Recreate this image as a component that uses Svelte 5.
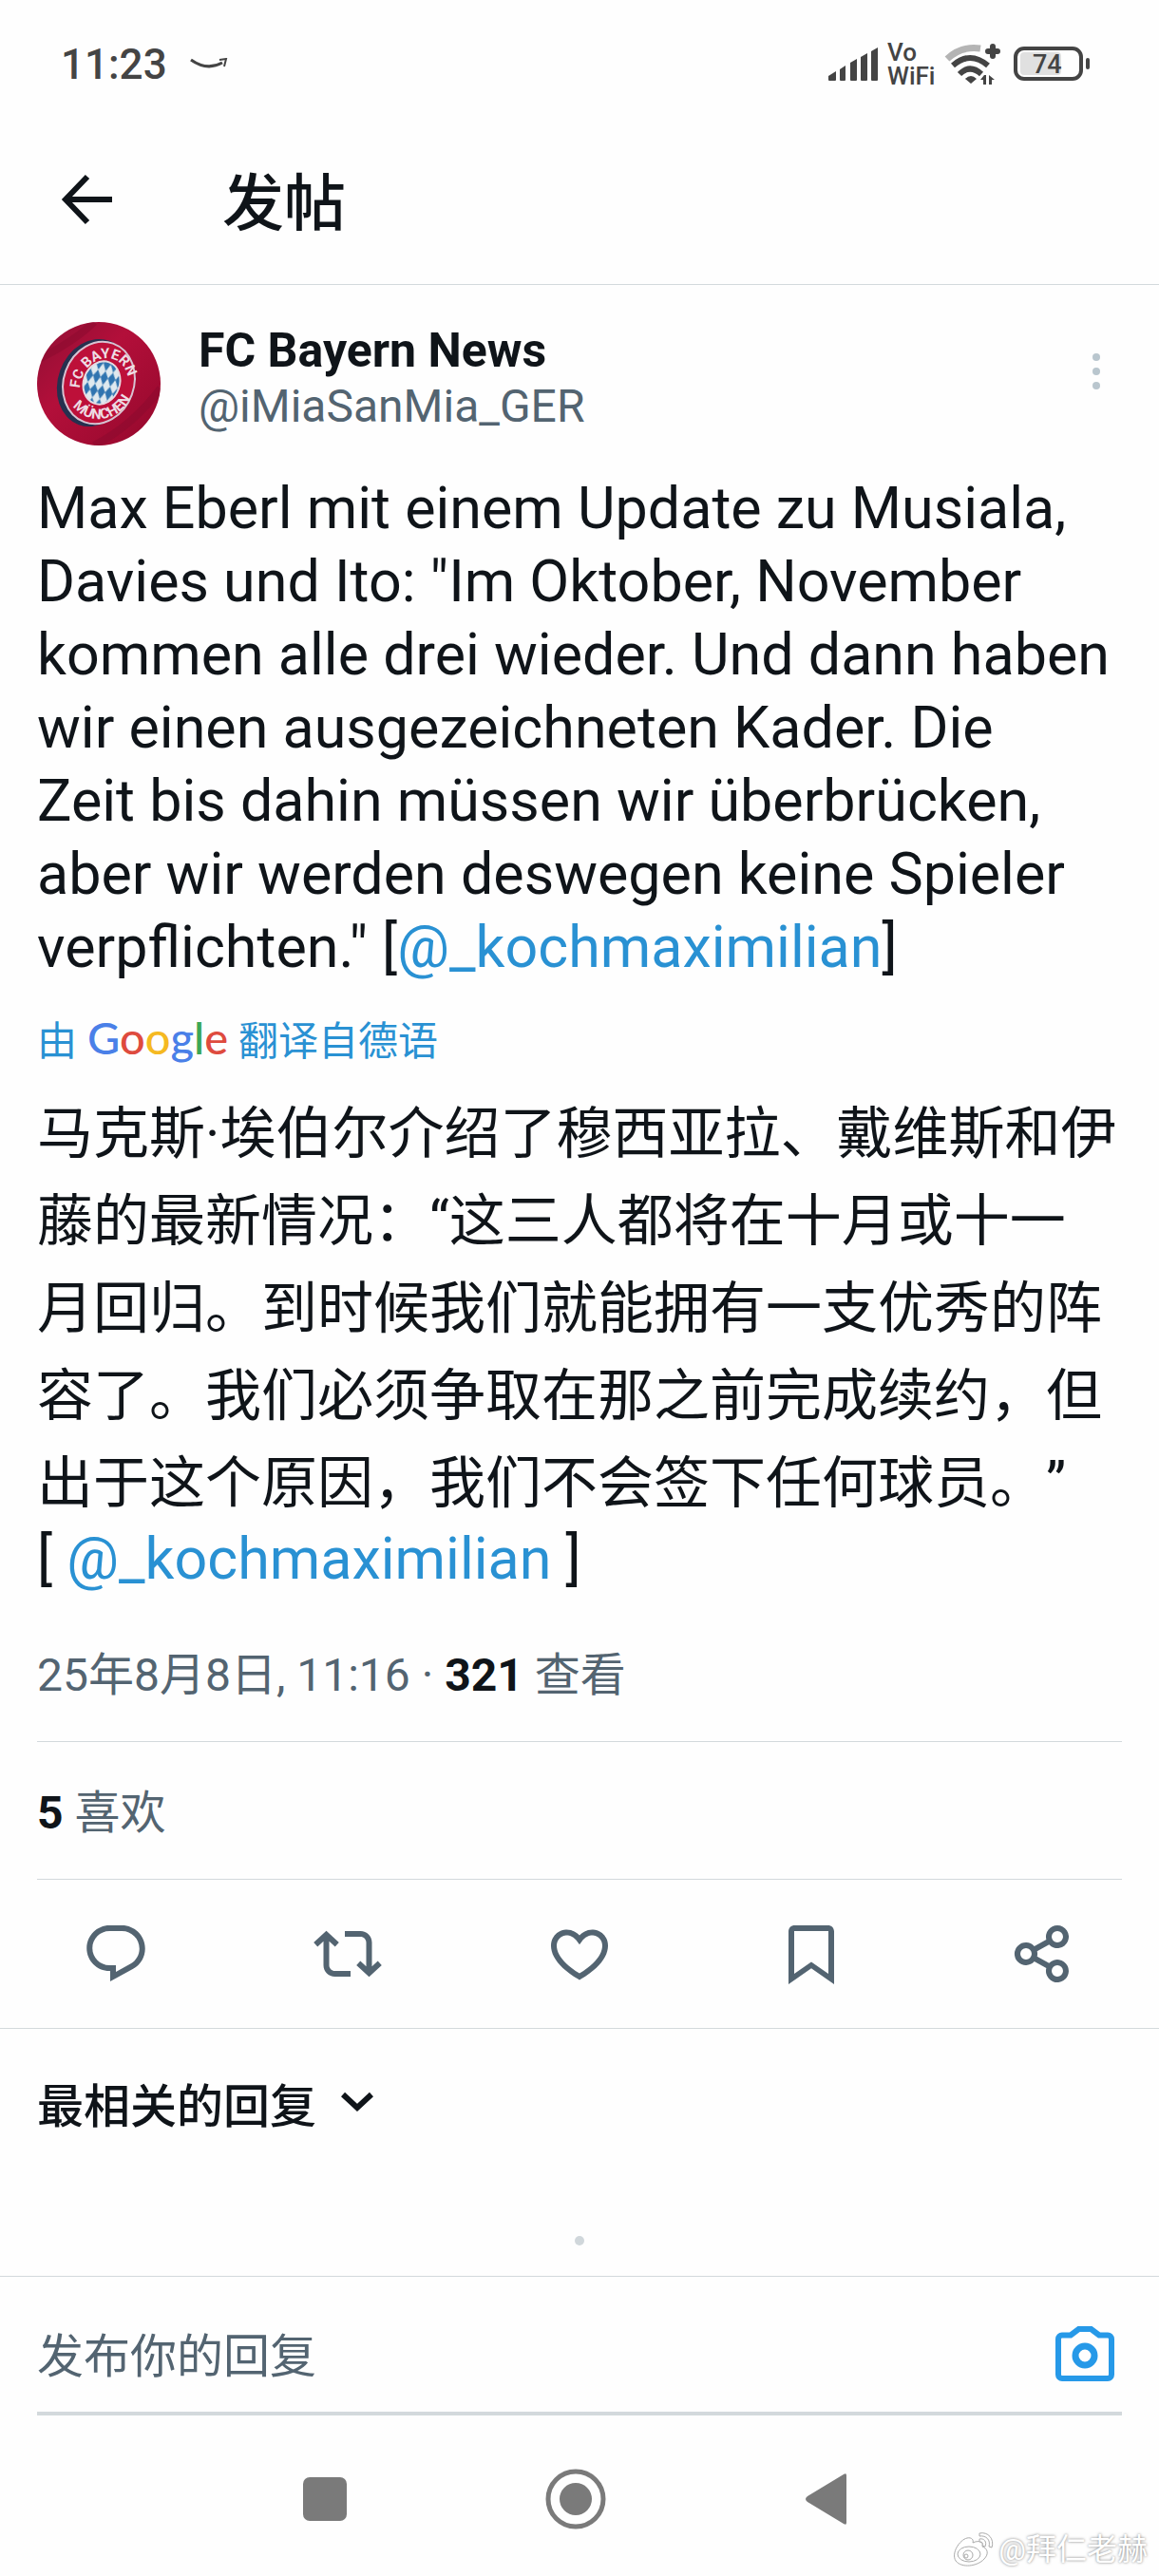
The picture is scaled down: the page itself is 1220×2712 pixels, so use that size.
<script lang="ts">
  interface Action {
    label: string;
    path: string;
  }

  const actions: Action[] = [
    {
      label: '回复',
      path: 'M1.751 10c0-4.42 3.584-8 8.005-8h4.366c4.49 0 8.129 3.64 8.129 8.13 0 2.96-1.607 5.68-4.196 7.11l-8.054 4.46v-3.69h-.067c-4.49.1-8.183-3.51-8.183-8.01zm8.005-6c-3.317 0-6.005 2.69-6.005 6 0 3.37 2.77 6.08 6.138 6.01l.351-.01h1.761v2.3l5.087-2.81c1.951-1.08 3.163-3.13 3.163-5.36 0-3.39-2.744-6.13-6.129-6.13H9.756z'
    },
    {
      label: '转帖',
      path: 'M4.5 3.88l4.432 4.14-1.364 1.46L5.5 7.55V16c0 1.1.896 2 2 2H13v2H7.5c-2.209 0-4-1.79-4-4V7.55L1.432 9.48.068 8.02 4.5 3.88zM16.5 6H11V4h5.5c2.209 0 4 1.79 4 4v8.45l2.068-1.93 1.364 1.46-4.432 4.14-4.432-4.14 1.364-1.46 2.068 1.93V8c0-1.1-.896-2-2-2z'
    },
    {
      label: '喜欢',
      path: 'M16.697 5.5c-1.222-.06-2.679.51-3.89 2.16l-.805 1.09-.806-1.09C9.984 6.01 8.526 5.44 7.304 5.5c-1.243.07-2.349.78-2.91 1.91-.552 1.12-.633 2.78.479 4.82 1.074 1.97 3.257 4.27 7.129 6.61 3.87-2.34 6.052-4.64 7.126-6.61 1.111-2.04 1.03-3.7.477-4.82-.561-1.13-1.666-1.84-2.908-1.91zm4.187 7.69c-1.351 2.48-4.001 5.12-8.379 7.67l-.503.3-.504-.3c-4.379-2.55-7.029-5.19-8.382-7.67-1.36-2.5-1.41-4.86-.514-6.67.887-1.79 2.647-2.91 4.601-3.01 1.651-.09 3.368.56 4.798 2.01 1.429-1.45 3.146-2.1 4.796-2.01 1.954.1 3.714 1.22 4.601 3.01.896 1.81.846 4.17-.514 6.67z'
    },
    {
      label: '书签',
      path: 'M4 4.2C4 2.9 4.9 2 6.2 2h11.6C19.1 2 20 2.9 20 4.2v18.5l-8-5.6-8 5.6V4.2zM6 4v15l6-4.2 6 4.2V4H6z'
    },
    {
      label: '分享',
      path: 'M17 2a4 4 0 1 1-2.9 6.75l-4.2 2.3a4 4 0 0 1 0 1.9l4.2 2.3a4 4 0 1 1-.98 1.75l-4.2-2.3a4 4 0 1 1 0-5.4l4.2-2.3A4 4 0 0 1 17 2zm0 2a2 2 0 1 0 0 4 2 2 0 0 0 0-4zM6 10a2 2 0 1 0 0 4 2 2 0 0 0 0-4zm11 6a2 2 0 1 0 0 4 2 2 0 0 0 0-4z'
    }
  ];

  const original = [
    'Max Eberl mit einem Update zu Musiala,',
    'Davies und Ito: "Im Oktober, November',
    'kommen alle drei wieder. Und dann haben',
    'wir einen ausgezeichneten Kader. Die',
    'Zeit bis dahin müssen wir überbrücken,',
    'aber wir werden deswegen keine Spieler',
    'verpflichten." ['
  ].join('\n');

  const translated = [
    '马克斯·埃伯尔介绍了穆西亚拉、戴维斯和伊',
    '藤的最新情况：“这三人都将在十月或十一',
    '月回归。到时候我们就能拥有一支优秀的阵',
    '容了。我们必须争取在那之前完成续约，但',
    '出于这个原因，我们不会签下任何球员。”'
  ].join('\n');

  let reply = '';
</script>

<div class="screen">
  <div class="status">
    <span class="clock">11:23</span>
    <svg class="smile" viewBox="0 0 40 14" width="40" height="14">
      <path d="M1 2Q18 14 34 5" fill="none" stroke="#444" stroke-width="3" />
      <path d="M31 2l7-1-2 8" fill="none" stroke="#444" stroke-width="2" />
    </svg>
    <svg class="signals" viewBox="0 -6 280 64" width="280" height="64">
      <g fill="#444">
        <path d="M2 42v-4l8-5v9q0 1-1 1H3q-1 0-1-1z" />
        <path d="M14 42V31l6-4v15q0 1-1 1h-4q-1 0-1-1z" />
        <path d="M25 42V24l7-4v22q0 1-1 1h-5q-1 0-1-1z" />
        <path d="M36 42V18l7-4v28q0 1-1 1h-5q-1 0-1-1z" />
        <path d="M47 42V12l7-4v34q0 1-1 1h-5q-1 0-1-1z" />
      </g>
      <text x="64" y="22" class="vo">Vo</text>
      <text x="64" y="47" class="vo">WiFi</text>
      <path d="M127 20Q142 6 162 9" fill="none" stroke="#b4b4b4" stroke-width="7" />
      <g fill="none" stroke="#444" stroke-width="6">
        <path d="M133 27Q151 11 170 27" />
        <path d="M140 36Q151 25 163 36" />
        <path d="M175 7v10M170 12h10" stroke-linecap="round" />
      </g>
      <path d="M146 41q6-6 12 0l-6 5zM162 42l4-5h2v10h-3v-5zM171 37l6 5h-3v5h-3z" fill="#444" />
      <rect x="199" y="9" width="69" height="32" rx="9" fill="none" stroke="#444" stroke-width="4" />
      <rect x="204" y="13" width="43" height="24" rx="4" fill="#e0e0e0" />
      <rect x="273" y="19" width="4" height="12" rx="2" fill="#444" />
      <text x="217" y="35" class="level">74</text>
    </svg>
  </div>

  <header>
    <button class="icon" aria-label="返回">
      <svg viewBox="0 0 54 54" width="54" height="54" fill="none" stroke="#0f1419" stroke-width="6">
        <path d="M54 27H6M28 3L5 27l23 24" />
      </svg>
    </button>
    <h1>发帖</h1>
  </header>

  <main>
    <article>
      <div class="author">
        <svg class="avatar" viewBox="0 0 130 130" width="130" height="130" role="img" aria-label="FC Bayern München">
          <defs>
            <clipPath id="round"><circle cx="65" cy="65" r="65" /></clipPath>
            <linearGradient id="cloth" x1="0" y1="0" x2="1" y2="1">
              <stop offset="0" stop-color="#8e0f34" />
              <stop offset="0.4" stop-color="#b30f3a" />
              <stop offset="1" stop-color="#94082c" />
            </linearGradient>
            <pattern id="rauten" width="8" height="15" patternUnits="userSpaceOnUse" patternTransform="rotate(-8)">
              <rect width="8" height="15" fill="#dfe9ef" />
              <path d="M4 0l4 7-4 8-4-8z" fill="#2f74b0" />
            </pattern>
            <path id="top" d="M45 72A25 30 20 0 1 96 60" />
            <path id="bottom" d="M32 78A36 38 20 0 0 102 69" />
          </defs>
          <g clip-path="url(#round)">
            <rect width="130" height="130" fill="url(#cloth)" />
            <path d="M0 40Q40 20 60 0M60 130Q100 110 130 70" fill="none" stroke="#8a0a2e" stroke-width="8" opacity="0.5" />
            <ellipse cx="60" cy="64" rx="38" ry="47" fill="#26304f" transform="rotate(20 60 64)" />
            <ellipse cx="65" cy="64" rx="37" ry="44" fill="#bd1039" stroke="#d7c3d2" stroke-width="2" transform="rotate(20 65 64)" />
            <ellipse cx="68" cy="64" rx="19" ry="23" fill="url(#rauten)" stroke="#e6dbe2" stroke-width="2" transform="rotate(20 68 64)" />
            <text class="crest" text-anchor="middle"><textPath href="#top" startOffset="50%">FC BAYERN</textPath></text>
            <text class="crest" text-anchor="middle"><textPath href="#bottom" startOffset="50%">MÜNCHEN</textPath></text>
          </g>
        </svg>
        <div class="names">
          <strong>FC Bayern News</strong>
          <span>@iMiaSanMia_GER</span>
        </div>
        <button class="icon more" aria-label="更多">
          <svg viewBox="0 0 10 40" width="10" height="40" fill="#b9c6ce">
            <circle cx="5" cy="5" r="4" />
            <circle cx="5" cy="20" r="4" />
            <circle cx="5" cy="35" r="4" />
          </svg>
        </button>
      </div>

      <p class="text">{original}<a href="#koch">@_kochmaximilian</a>]</p>

      <p class="source">
        <span>由</span>
        <span class="google"><i class="b">G</i><i class="r">o</i><i class="y">o</i><i class="b">g</i><i class="g">l</i><i class="r">e</i></span>
        <span>翻译自德语</span>
      </p>

      <p class="text zh">{translated}</p>
      <p class="text mention">[ <a href="#koch">@_kochmaximilian</a> ]</p>

      <p class="meta date">25年8月8日, 11:16 · <b>321</b> 查看</p>
      <p class="meta likes"><b>5</b> 喜欢</p>
    </article>

    <div class="actions">
      {#each actions as action}
        <button class="icon" aria-label={action.label}>
          <svg viewBox="0 0 24 24" width="72" height="72" fill="#536471" fill-rule="evenodd">
            <path d={action.path} />
          </svg>
        </button>
      {/each}
    </div>

    <button class="sort">
      最相关的回复
      <svg viewBox="0 0 34 22" width="34" height="22" fill="none" stroke="#0f1419" stroke-width="6">
        <path d="M2 3l15 14L32 3" />
      </svg>
    </button>
    <div class="end"></div>
  </main>

  <footer>
    <form class="reply" on:submit|preventDefault>
      <input type="text" bind:value={reply} placeholder="发布你的回复" aria-label="发布你的回复" />
      <button type="button" class="icon" aria-label="添加照片">
        <svg viewBox="0 0 62 58" width="62" height="58" fill="none" stroke="#2699e8" stroke-width="6">
          <path d="M7 9.500H16L24.500 3h13l8.500 6.500h9a4 4 0 0 1 4 4V51a4 4 0 0 1-4 4H7a4 4 0 0 1-4-4V13.500a4 4 0 0 1 4-4z" />
          <circle cx="31" cy="31" r="10" stroke-width="7" />
        </svg>
      </button>
    </form>
    <nav>
      <button class="icon" aria-label="最近任务">
        <svg viewBox="0 0 64 64" width="64" height="64" fill="#7a7a7a"><rect x="9" y="9" width="46" height="46" rx="7" /></svg>
      </button>
      <button class="icon" aria-label="主屏幕">
        <svg viewBox="0 0 64 64" width="64" height="64" fill="#7a7a7a">
          <circle cx="32" cy="32" r="29" fill="none" stroke="#7a7a7a" stroke-width="5" />
          <circle cx="32" cy="32" r="17" />
        </svg>
      </button>
      <button class="icon" aria-label="返回上一页">
        <svg viewBox="0 0 64 64" width="64" height="64" fill="#7a7a7a">
          <path d="M50 6q3-2 3 1v50q0 3-3 1L12 35q-4-3 0-6z" />
        </svg>
      </button>
    </nav>
  </footer>

  <div class="watermark">
    <svg viewBox="0 0 44 36" width="44" height="36" fill="#fff" stroke="#aaa" stroke-width="1">
      <path d="M15 6c5-1 7 2 6 5 6-3 12-1 10 4 6 2 7 8 2 13-7 8-24 10-30 2C-2 22 7 8 15 6z" />
      <path d="M28 1c9-2 16 6 13 15l-3-1c2-7-3-12-10-11zM28 7c5-1 8 3 6 8l-3-1c1-3 0-4-3-4z" />
      <ellipse cx="17" cy="23" rx="12" ry="8" />
      <circle cx="16" cy="24" r="5" />
      <circle cx="14" cy="25" r="2" />
    </svg>
    <span>@拜仁老赫</span>
  </div>
</div>

<style>
  :global(body) {
    background: #fefefe;
  }

  .screen {
    position: relative;
    display: flex;
    flex-direction: column;
    min-height: 100vh;
    box-sizing: border-box;
    color: #0f1419;
    font-family: Roboto, "Noto Sans CJK SC", sans-serif;
    font-size: 49px;
  }

  p,
  h1 {
    margin: 0;
  }

  a {
    color: #2991d3;
    text-decoration: none;
  }

  svg {
    display: block;
  }

  .icon {
    padding: 0;
    border: none;
    background: none;
    cursor: pointer;
  }

  .status {
    display: flex;
    align-items: center;
    height: 136px;
    padding: 0 70px 0 64px;
    color: #444;
  }

  .clock {
    font-size: 44px;
    font-weight: 500;
  }

  .smile {
    margin-left: 24px;
  }

  .signals {
    margin-left: auto;
  }

  .vo {
    fill: #444;
    font-size: 26px;
    font-weight: 500;
  }

  .level {
    fill: #444;
    font-size: 27px;
    font-weight: 500;
  }

  header {
    display: flex;
    align-items: center;
    gap: 116px;
    height: 164px;
    padding: 0 64px 16px;
    box-sizing: border-box;
    border-bottom: 1px solid #d3d9dc;
  }

  h1 {
    padding-top: 10px;
    font-size: 65px;
    font-weight: 500;
    line-height: 80px;
  }

  article {
    padding: 39px 39px 0;
  }

  .author {
    display: flex;
    gap: 40px;
  }

  .names {
    display: flex;
    flex: 1;
    flex-direction: column;
    font-size: 48px;
    line-height: 58px;
  }

  .names strong {
    font-size: 50px;
    font-weight: 700;
    line-height: 60px;
  }

  .names span {
    color: #536471;
  }

  .more {
    align-self: flex-start;
    margin: 32px 22px 0 0;
  }

  .crest {
    fill: #eedde4;
    font-size: 15px;
    font-weight: 700;
  }

  .text {
    font-size: 61px;
    line-height: 77px;
    white-space: pre-line;
  }

  .author + .text {
    margin-top: 28px;
  }

  .zh {
    font-size: 59px;
    line-height: 92px;
    text-spacing-trim: space-all;
  }

  .mention {
    line-height: 67px;
  }

  .source {
    display: flex;
    align-items: center;
    gap: 11px;
    height: 112px;
    color: #2991d3;
    font-size: 42px;
  }

  .google {
    font-family: Lato, sans-serif;
    font-size: 47px;
    font-weight: 500;
  }

  .google i {
    font-style: normal;
  }

  .b {
    color: #4a80e8;
  }

  .r {
    color: #de4b3e;
  }

  .y {
    color: #f5b921;
  }

  .g {
    color: #3ba757;
  }

  .meta {
    color: #536471;
    font-size: 48px;
    line-height: 138px;
    border-bottom: 1px solid #d3d9dc;
  }

  .meta b {
    color: #0f1419;
  }

  .date {
    padding-top: 20px;
  }

  .likes {
    padding-top: 6px;
  }

  .actions {
    display: grid;
    grid-template-columns: repeat(5, 1fr);
    justify-items: center;
    padding: 42px 0;
    border-bottom: 1px solid #d3d9dc;
  }

  .sort {
    display: flex;
    align-items: center;
    gap: 26px;
    height: 154px;
    padding: 0 39px;
    border: none;
    background: none;
    color: inherit;
    font: inherit;
    font-weight: 500;
  }

  .end {
    width: 10px;
    height: 10px;
    margin: 64px auto 30px;
    border-radius: 50%;
    background: #d0d7db;
  }

  footer {
    margin-top: auto;
    border-top: 1px solid #d3d9dc;
  }

  .reply {
    display: flex;
    align-items: center;
    height: 122px;
    margin: 0 39px;
    padding: 20px 8px 0 0;
    border-bottom: 4px solid #d3d9dc;
  }

  .reply input {
    flex: 1;
    min-width: 0;
    padding: 6px 0 0;
    border: none;
    outline: none;
    background: none;
    font: inherit;
  }

  .reply input::placeholder {
    color: #536471;
  }

  nav {
    display: flex;
    justify-content: center;
    gap: 200px;
    padding: 56px 9px 49px 0;
  }

  .watermark {
    position: absolute;
    right: 12px;
    bottom: 8px;
    display: flex;
    align-items: center;
    gap: 4px;
    color: #fff;
    font-size: 32px;
    line-height: 40px;
    text-shadow: 0 0 3px #777;
  }
</style>
